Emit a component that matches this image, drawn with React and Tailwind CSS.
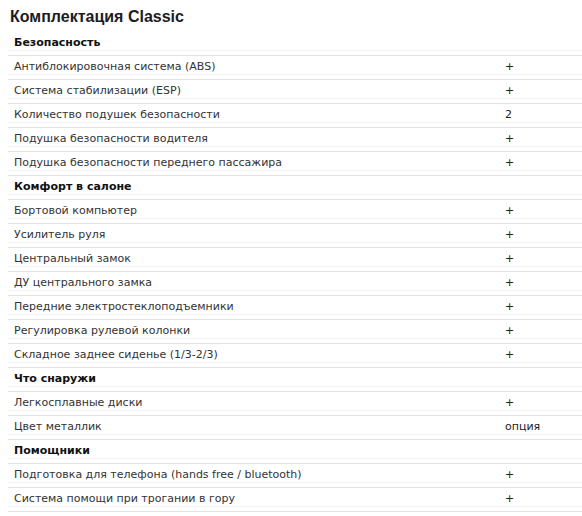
const groups = [
  {
    title: "Безопасность",
    items: [
      ["Антиблокировочная система (ABS)", "+"],
      ["Система стабилизации (ESP)", "+"],
      ["Количество подушек безопасности", "2"],
      ["Подушка безопасности водителя", "+"],
      ["Подушка безопасности переднего пассажира", "+"],
    ],
  },
  {
    title: "Комфорт в салоне",
    items: [
      ["Бортовой компьютер", "+"],
      ["Усилитель руля", "+"],
      ["Центральный замок", "+"],
      ["ДУ центрального замка", "+"],
      ["Передние электростеклоподъемники", "+"],
      ["Регулировка рулевой колонки", "+"],
      ["Складное заднее сиденье (1/3-2/3)", "+"],
    ],
  },
  {
    title: "Что снаружи",
    items: [
      ["Легкосплавные диски", "+"],
      ["Цвет металлик", "опция"],
    ],
  },
  {
    title: "Помощники",
    items: [
      ["Подготовка для телефона (hands free / bluetooth)", "+"],
      ["Система помощи при трогании в гору", "+"],
    ],
  },
];

function Row({ label, value, bold }) {
  return (
    <div className="flex h-6 items-center border-b border-[#e2e2e2] pl-1.5 shadow-[inset_0_-4px_0_#fff,inset_0_-5px_0_#f3f3f3]">
      <div
        className={`w-[491px] shrink-0 ${bold ? "font-bold text-[#111]" : "text-[#333]"}`}
      >
        {label}
      </div>
      <div className="text-[#222]">{value}</div>
    </div>
  );
}

export default function App() {
  return (
    <div className="min-h-screen bg-white pt-[7px]">
      <h1 className="ml-2.5 text-[16px] leading-[20px] font-bold text-[#1c1c24] font-['Liberation_Sans',Arial,sans-serif]">
        Комплектация Classic
      </h1>
      <div className="ml-2 mt-[5px] text-[11px] font-['DejaVu_Sans',Verdana,sans-serif]">
        {groups.map((g) => (
          <div key={g.title}>
            <Row label={g.title} bold />
            {g.items.map(([label, value]) => (
              <Row key={label} label={label} value={value} />
            ))}
          </div>
        ))}
      </div>
    </div>
  );
}
